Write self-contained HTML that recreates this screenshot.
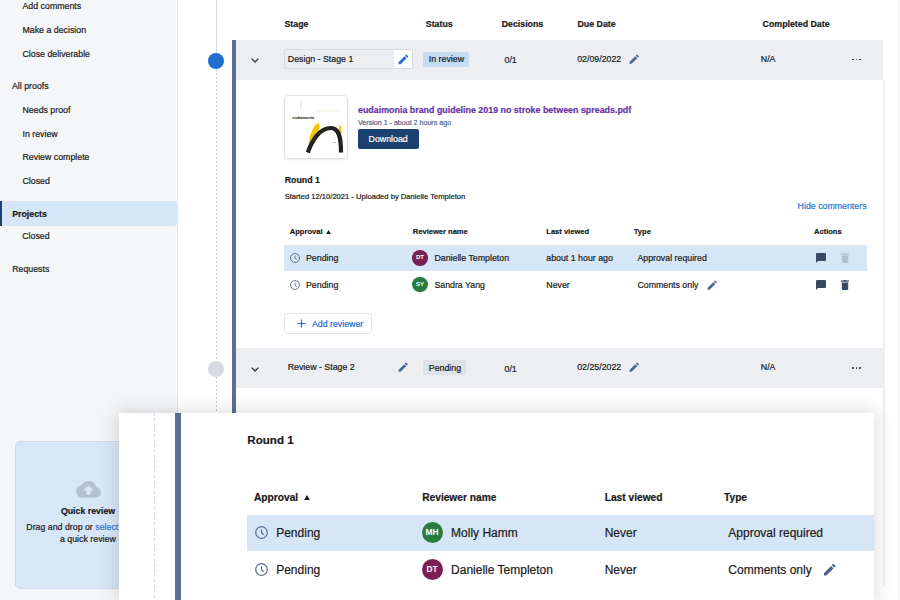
<!DOCTYPE html><html><head><meta charset="utf-8"><style>
*{margin:0;padding:0;box-sizing:border-box}
html,body{width:900px;height:600px;overflow:hidden;background:#fff;font-family:"Liberation Sans",sans-serif}
.a{position:absolute}
.t{position:absolute;line-height:1;white-space:nowrap;-webkit-text-stroke:0.2px currentColor}
.av{border-radius:50%;color:#fff;text-align:center;font-weight:700}
</style></head><body>
<div class="a" style="left:0px;top:0px;width:177px;height:600px;background:#f5f6f8"></div>
<div class="a" style="left:177px;top:0px;width:1px;height:600px;background:#e6e9ee"></div>
<div class="t" style="left:22.5px;top:1.55px;font-size:8.8px;color:#1a1a1a;">Add comments</div>
<div class="t" style="left:22.5px;top:26.05px;font-size:8.8px;color:#1a1a1a;">Make a decision</div>
<div class="t" style="left:22.5px;top:49.95px;font-size:8.8px;color:#1a1a1a;">Close deliverable</div>
<div class="t" style="left:12.0px;top:81.95px;font-size:8.8px;color:#1a1a1a;">All proofs</div>
<div class="t" style="left:22.5px;top:106.05px;font-size:8.8px;color:#1a1a1a;">Needs proof</div>
<div class="t" style="left:22.5px;top:129.95px;font-size:8.8px;color:#1a1a1a;">In review</div>
<div class="t" style="left:22.5px;top:153.25px;font-size:8.8px;color:#1a1a1a;">Review complete</div>
<div class="t" style="left:22.5px;top:177.15px;font-size:8.8px;color:#1a1a1a;">Closed</div>
<div class="a" style="left:0px;top:201px;width:177px;height:25px;background:#d7e6f6;border-radius:0 3px 3px 0"></div>
<div class="a" style="left:0px;top:201px;width:2px;height:25px;background:#1b4173"></div>
<div class="t" style="left:12.2px;top:209.95px;font-size:8.8px;font-weight:700;color:#1a1a1a;">Projects</div>
<div class="t" style="left:22.2px;top:232.45px;font-size:8.8px;color:#1a1a1a;">Closed</div>
<div class="t" style="left:12.2px;top:264.55px;font-size:8.8px;color:#1a1a1a;">Requests</div>
<div class="a" style="left:15px;top:441px;width:147px;height:148px;background:#d8e7f7;border:1px dotted #c3cfdc;border-radius:5px"></div>
<svg class="a" style="left:75.8px;top:481.1px" width="25" height="16.7" viewBox="0 4 24 16"><path fill="#b5c1ce" d="M19.35 10.04C18.67 6.59 15.64 4 12 4 9.11 4 6.6 5.64 5.35 8.04 2.34 8.36 0 10.91 0 14c0 3.31 2.69 6 6 6h13c2.76 0 5-2.24 5-5 0-2.64-2.05-4.78-4.65-4.96zM14 13v4h-4v-4H7l5-5 5 5h-3z"/></svg>
<div class="t" style="left:60.9px;top:507.45px;font-size:8.8px;font-weight:700;color:#1a1a1a;">Quick review</div>
<div class="t" style="left:26.3px;top:522.85px;font-size:8.8px;color:#1a1a1a;">Drag and drop or <span style="color:#2a78d6">select a file</span></div>
<div class="t" style="left:60.0px;top:535.15px;font-size:8.8px;color:#1a1a1a;">a quick review</div>
<div class="a" style="left:216px;top:0px;width:1px;height:53px;background:#d3dae4"></div>
<div class="a" style="left:216px;top:69px;width:1px;height:344px;background:repeating-linear-gradient(#c3ccd8 0 2px,transparent 2px 4px)"></div>
<div class="a" style="left:208px;top:53px;width:16px;height:16px;background:#1f6fd0;border-radius:50%"></div>
<div class="a" style="left:208px;top:361px;width:16px;height:16px;background:#d5dae3;border-radius:50%"></div>
<div class="a" style="left:883px;top:80px;width:1.5px;height:505px;background:#eceef2"></div>
<div class="a" style="left:898px;top:0px;width:1px;height:600px;background:#eef0f3"></div>
<div class="t" style="left:284.5px;top:19.55px;font-size:8.8px;font-weight:700;color:#1a1a1a;">Stage</div>
<div class="t" style="left:425.8px;top:19.55px;font-size:8.8px;font-weight:700;color:#1a1a1a;">Status</div>
<div class="t" style="left:501.7px;top:19.55px;font-size:8.8px;font-weight:700;color:#1a1a1a;">Decisions</div>
<div class="t" style="left:577.5px;top:19.55px;font-size:8.8px;font-weight:700;color:#1a1a1a;">Due Date</div>
<div class="t" style="left:762.6px;top:19.55px;font-size:8.8px;font-weight:700;color:#1a1a1a;">Completed Date</div>
<div class="a" style="left:232px;top:40px;width:4px;height:373px;background:#5c6f90"></div>
<div class="a" style="left:236px;top:40px;width:647px;height:40px;background:#eceef2"></div>
<svg class="a" style="left:250px;top:57px" width="10" height="7" viewBox="0 0 10 7"><path d="M1.6 1.6 L5 5 L8.4 1.6" fill="none" stroke="#2b3340" stroke-width="1.3"/></svg>
<div class="a" style="left:284px;top:49px;width:129px;height:20px;background:#eceef2;border:1px solid #d7dbe2;border-radius:2px"></div>
<div class="a" style="left:394px;top:50px;width:18px;height:18px;background:#fff"></div>
<svg class="a" style="left:397.1px;top:53.1px" width="12.8" height="12.8" viewBox="0 0 24 24"><path fill="#1f6fd0" d="M3 17.25V21h3.75L17.81 9.94l-3.75-3.75L3 17.25zM20.71 7.04a1 1 0 0 0 0-1.41l-2.34-2.34a1 1 0 0 0-1.41 0l-1.83 1.83 3.75 3.75 1.83-1.83z"/></svg>
<div class="t" style="left:287.8px;top:54.75px;font-size:8.8px;color:#1a1a1a;">Design - Stage 1</div>
<div class="a" style="left:423px;top:52px;width:46px;height:15px;background:#c6dcf3;border-radius:2px"></div>
<div class="t" style="left:428.8px;top:55.05px;font-size:8.8px;color:#1a1a1a;">In review</div>
<div class="t" style="left:504.5px;top:55.85px;font-size:8.8px;color:#1a1a1a;">0/1</div>
<div class="t" style="left:577.2px;top:54.55px;font-size:8.8px;color:#1a1a1a;">02/09/2022</div>
<svg class="a" style="left:628.2px;top:52.9px" width="12.4" height="12.4" viewBox="0 0 24 24"><path fill="#4a6590" d="M3 17.25V21h3.75L17.81 9.94l-3.75-3.75L3 17.25zM20.71 7.04a1 1 0 0 0 0-1.41l-2.34-2.34a1 1 0 0 0-1.41 0l-1.83 1.83 3.75 3.75 1.83-1.83z"/></svg>
<div class="t" style="left:760.8px;top:54.75px;font-size:8.8px;color:#1a1a1a;">N/A</div>
<div class="a" style="left:852.3px;top:58.6px;width:1.8px;height:1.8px;border-radius:50%;background:#222"></div><div class="a" style="left:855.7px;top:58.6px;width:1.8px;height:1.8px;border-radius:50%;background:#222"></div><div class="a" style="left:859.1px;top:58.6px;width:1.8px;height:1.8px;border-radius:50%;background:#222"></div>
<div class="a" style="left:284px;top:95px;width:64px;height:64px;background:#fff;border:1px solid #dde2ea;border-radius:4px;box-shadow:0 1px 2px rgba(0,0,0,.08)"></div>
<svg class="a" style="left:284px;top:95px" width="64" height="64" viewBox="0 0 64 64">
<rect x="16.5" y="6" width="0.8" height="9" fill="#cfe0f5"/>
<rect x="32" y="15.5" width="26" height="0.8" fill="#dcefd6"/>
<text x="8.5" y="24" font-family="Liberation Sans" font-size="3.9" font-weight="700" fill="#111">eudaimonia</text>
<ellipse cx="30.2" cy="40" rx="3.6" ry="12.5" transform="rotate(20 30.2 40)" fill="#f5c400"/>
<ellipse cx="56" cy="38" rx="1.5" ry="8" fill="#f5c400"/>
<path d="M23.8 57.5 C28 45 36 33 47 33 C54 33 57 40 57 57.5" fill="none" stroke="#1e1e1e" stroke-width="4.2"/><path d="M23.8 57.5 C28 45 36 33 47 33 C54 33 57 40 57 57.5" fill="none" stroke="#3c3c3c" stroke-width="1" stroke-dasharray="0.8 1"/>
<rect x="49" y="47" width="3" height="0.6" fill="#999"/>
</svg>
<div class="t" style="left:358.0px;top:105.68px;font-size:8.88px;font-weight:700;color:#6633a8;">eudaimonia brand guideline 2019 no stroke between spreads.pdf</div>
<div class="t" style="left:358.0px;top:119.79px;font-size:7.1px;color:#53658a;">Version 1 - about 2 hours ago</div>
<div class="a" style="left:358px;top:129px;width:61px;height:20px;background:#1b4173;border-radius:2px"></div>
<div class="t" style="left:368.6px;top:135.15px;font-size:8.8px;color:#fff;">Download</div>
<div class="t" style="left:284.7px;top:175.75px;font-size:8.8px;font-weight:700;color:#1a1a1a;">Round 1</div>
<div class="t" style="left:284.7px;top:192.87px;font-size:7.6px;color:#1a1a1a;">Started 12/10/2021 - Uploaded by Danielle Templeton</div>
<div class="t" style="left:797.6px;top:202.35px;font-size:8.8px;color:#2776d2;">Hide commenters</div>
<div class="t" style="left:289.8px;top:228.31px;font-size:7.55px;font-weight:700;color:#1a1a1a;">Approval</div>
<div class="t" style="left:412.8px;top:228.31px;font-size:7.55px;font-weight:700;color:#1a1a1a;">Reviewer name</div>
<div class="t" style="left:546.3px;top:228.31px;font-size:7.55px;font-weight:700;color:#1a1a1a;">Last viewed</div>
<div class="t" style="left:633.8px;top:228.31px;font-size:7.55px;font-weight:700;color:#1a1a1a;">Type</div>
<div class="t" style="left:814.0px;top:228.31px;font-size:7.55px;font-weight:700;color:#1a1a1a;">Actions</div>
<svg class="a" style="left:326.2px;top:230.2px" width="5" height="4.3" viewBox="0 0 10 10" preserveAspectRatio="none"><path d="M5 0L10 10H0z" fill="#1a1a1a"/></svg>
<div class="a" style="left:284px;top:245px;width:583px;height:26px;background:#d7e6f6"></div>
<svg class="a" style="left:290px;top:253px" width="10" height="10" viewBox="0 0 20 20"><circle cx="10" cy="10" r="8.9" fill="none" stroke="#5a6f93" stroke-width="1.9"/><path d="M10 5V10.4L13.5 13.4" fill="none" stroke="#5a6f93" stroke-width="1.8"/></svg>
<div class="t" style="left:306.0px;top:253.95px;font-size:8.8px;color:#1a1a1a;">Pending</div>
<div class="a av" style="left:412.2px;top:250.2px;width:15.5px;height:15.5px;background:#7b1e53;font-size:6px;line-height:15.5px">DT</div>
<div class="t" style="left:434.4px;top:253.95px;font-size:8.8px;color:#1a1a1a;">Danielle Templeton</div>
<div class="t" style="left:546.3px;top:253.95px;font-size:8.8px;color:#1a1a1a;">about 1 hour ago</div>
<div class="t" style="left:637.4px;top:253.95px;font-size:8.8px;color:#1a1a1a;">Approval required</div>
<svg class="a" style="left:815px;top:252px" width="12" height="12" viewBox="0 0 24 24"><path fill="#374861" d="M4 2h16a2 2 0 0 1 2 2v12a2 2 0 0 1-2 2H6l-4 4V4a2 2 0 0 1 2-2z"/></svg>
<svg class="a" style="left:290px;top:279.5px" width="10" height="10" viewBox="0 0 20 20"><circle cx="10" cy="10" r="8.9" fill="none" stroke="#5a6f93" stroke-width="1.9"/><path d="M10 5V10.4L13.5 13.4" fill="none" stroke="#5a6f93" stroke-width="1.8"/></svg>
<div class="t" style="left:306.0px;top:281.15px;font-size:8.8px;color:#1a1a1a;">Pending</div>
<div class="a av" style="left:412.2px;top:276.8px;width:15.5px;height:15.5px;background:#2a7b3e;font-size:6px;line-height:15.5px">SY</div>
<div class="t" style="left:434.4px;top:281.15px;font-size:8.8px;color:#1a1a1a;">Sandra Yang</div>
<div class="t" style="left:546.3px;top:281.15px;font-size:8.8px;color:#1a1a1a;">Never</div>
<div class="t" style="left:637.4px;top:281.15px;font-size:8.8px;color:#1a1a1a;">Comments only</div>
<svg class="a" style="left:815px;top:278.5px" width="12" height="12" viewBox="0 0 24 24"><path fill="#374861" d="M4 2h16a2 2 0 0 1 2 2v12a2 2 0 0 1-2 2H6l-4 4V4a2 2 0 0 1 2-2z"/></svg>
<svg class="a" style="left:841px;top:253.3px" width="8" height="10" viewBox="0 0 16 20"><path fill="#b3bfcc" d="M5.5 0h5l.8 1.2H16v2.4H0V1.2h4.7zM1.6 5.2h12.8v12.6a2 2 0 0 1-2 2H3.6a2 2 0 0 1-2-2z"/></svg>
<svg class="a" style="left:841px;top:280.3px" width="8" height="10" viewBox="0 0 16 20"><path fill="#374861" d="M5.5 0h5l.8 1.2H16v2.4H0V1.2h4.7zM1.6 5.2h12.8v12.6a2 2 0 0 1-2 2H3.6a2 2 0 0 1-2-2z"/></svg>
<svg class="a" style="left:705.5px;top:278.7px" width="12.4" height="12.4" viewBox="0 0 24 24"><path fill="#4a6590" d="M3 17.25V21h3.75L17.81 9.94l-3.75-3.75L3 17.25zM20.71 7.04a1 1 0 0 0 0-1.41l-2.34-2.34a1 1 0 0 0-1.41 0l-1.83 1.83 3.75 3.75 1.83-1.83z"/></svg>
<div class="a" style="left:284px;top:313px;width:88px;height:21px;background:#fff;border:1px solid #e2e5ea;border-radius:3px"></div>
<svg class="a" style="left:297px;top:319px" width="9" height="9" viewBox="0 0 9 9"><path d="M4.5 0.5v8M0.5 4.5h8" stroke="#1f6fd0" stroke-width="1.2"/></svg>
<div class="t" style="left:311.9px;top:319.65px;font-size:8.8px;color:#1a6dd4;">Add reviewer</div>
<div class="a" style="left:236px;top:348px;width:647px;height:40px;background:#eceef2"></div>
<svg class="a" style="left:250px;top:366px" width="10" height="7" viewBox="0 0 10 7"><path d="M1.6 1.6 L5 5 L8.4 1.6" fill="none" stroke="#2b3340" stroke-width="1.3"/></svg>
<div class="t" style="left:287.7px;top:363.25px;font-size:8.8px;color:#1a1a1a;">Review - Stage 2</div>
<svg class="a" style="left:396.8px;top:361.2px" width="12.4" height="12.4" viewBox="0 0 24 24"><path fill="#4a6590" d="M3 17.25V21h3.75L17.81 9.94l-3.75-3.75L3 17.25zM20.71 7.04a1 1 0 0 0 0-1.41l-2.34-2.34a1 1 0 0 0-1.41 0l-1.83 1.83 3.75 3.75 1.83-1.83z"/></svg>
<div class="a" style="left:423px;top:360px;width:43px;height:15px;background:#dde1e8;border-radius:2px"></div>
<div class="t" style="left:428.8px;top:363.75px;font-size:8.8px;color:#1a1a1a;">Pending</div>
<div class="t" style="left:504.5px;top:364.65px;font-size:8.8px;color:#1a1a1a;">0/1</div>
<div class="t" style="left:577.2px;top:363.05px;font-size:8.8px;color:#1a1a1a;">02/25/2022</div>
<svg class="a" style="left:627.7px;top:361.3px" width="12.4" height="12.4" viewBox="0 0 24 24"><path fill="#4a6590" d="M3 17.25V21h3.75L17.81 9.94l-3.75-3.75L3 17.25zM20.71 7.04a1 1 0 0 0 0-1.41l-2.34-2.34a1 1 0 0 0-1.41 0l-1.83 1.83 3.75 3.75 1.83-1.83z"/></svg>
<div class="t" style="left:760.8px;top:363.05px;font-size:8.8px;color:#1a1a1a;">N/A</div>
<div class="a" style="left:852.3px;top:366.9px;width:1.8px;height:1.8px;border-radius:50%;background:#222"></div><div class="a" style="left:855.7px;top:366.9px;width:1.8px;height:1.8px;border-radius:50%;background:#222"></div><div class="a" style="left:859.1px;top:366.9px;width:1.8px;height:1.8px;border-radius:50%;background:#222"></div>
<div class="a" style="left:119px;top:413px;width:755px;height:187px;background:#fff;box-shadow:0 0 17px 3px rgba(0,0,0,.13)"></div>
<div class="a" style="left:153.5px;top:413px;width:1.5px;height:187px;background:repeating-linear-gradient(#d3dae4 0 3px,transparent 3px 5.2px)"></div>
<div class="a" style="left:175.4px;top:413px;width:5.599999999999994px;height:187px;background:#5c6f90"></div>
<div class="t" style="left:247.3px;top:433.98px;font-size:11.6px;font-weight:700;color:#1a1a1a;">Round 1</div>
<div class="t" style="left:254.0px;top:492.67px;font-size:10.2px;font-weight:700;color:#1a1a1a;">Approval</div>
<div class="t" style="left:422.2px;top:492.67px;font-size:10.2px;font-weight:700;color:#1a1a1a;">Reviewer name</div>
<div class="t" style="left:604.7px;top:492.67px;font-size:10.2px;font-weight:700;color:#1a1a1a;">Last viewed</div>
<div class="t" style="left:724.0px;top:492.67px;font-size:10.2px;font-weight:700;color:#1a1a1a;">Type</div>
<svg class="a" style="left:304px;top:494.6px" width="6" height="5.2" viewBox="0 0 10 10" preserveAspectRatio="none"><path d="M5 0L10 10H0z" fill="#1a1a1a"/></svg>
<div class="a" style="left:247px;top:514.5px;width:627px;height:36.5px;background:#d7e6f6"></div>
<svg class="a" style="left:255px;top:526.3px" width="13" height="13" viewBox="0 0 20 20"><circle cx="10" cy="10" r="8.9" fill="none" stroke="#5a6f93" stroke-width="1.9"/><path d="M10 5V10.4L13.5 13.4" fill="none" stroke="#5a6f93" stroke-width="1.8"/></svg>
<div class="t" style="left:276.2px;top:527.14px;font-size:12px;color:#1a1a1a;">Pending</div>
<div class="a av" style="left:421.5px;top:522.3px;width:21px;height:21px;background:#2a7b3e;font-size:8.4px;line-height:21px">MH</div>
<div class="t" style="left:451.1px;top:527.14px;font-size:12px;color:#1a1a1a;">Molly Hamm</div>
<div class="t" style="left:604.7px;top:527.14px;font-size:12px;color:#1a1a1a;">Never</div>
<div class="t" style="left:728.3px;top:527.14px;font-size:12px;color:#1a1a1a;">Approval required</div>
<svg class="a" style="left:255px;top:562.8px" width="13" height="13" viewBox="0 0 20 20"><circle cx="10" cy="10" r="8.9" fill="none" stroke="#5a6f93" stroke-width="1.9"/><path d="M10 5V10.4L13.5 13.4" fill="none" stroke="#5a6f93" stroke-width="1.8"/></svg>
<div class="t" style="left:276.2px;top:563.94px;font-size:12px;color:#1a1a1a;">Pending</div>
<div class="a av" style="left:421.5px;top:558.8px;width:21px;height:21px;background:#7b1e53;font-size:8.4px;line-height:21px">DT</div>
<div class="t" style="left:451.1px;top:563.94px;font-size:12px;color:#1a1a1a;">Danielle Templeton</div>
<div class="t" style="left:604.7px;top:563.94px;font-size:12px;color:#1a1a1a;">Never</div>
<div class="t" style="left:728.3px;top:563.94px;font-size:12px;color:#1a1a1a;">Comments only</div>
<svg class="a" style="left:821.7px;top:561.8px" width="15.5" height="15.5" viewBox="0 0 24 24"><path fill="#4a6590" d="M3 17.25V21h3.75L17.81 9.94l-3.75-3.75L3 17.25zM20.71 7.04a1 1 0 0 0 0-1.41l-2.34-2.34a1 1 0 0 0-1.41 0l-1.83 1.83 3.75 3.75 1.83-1.83z"/></svg>
</body></html>
